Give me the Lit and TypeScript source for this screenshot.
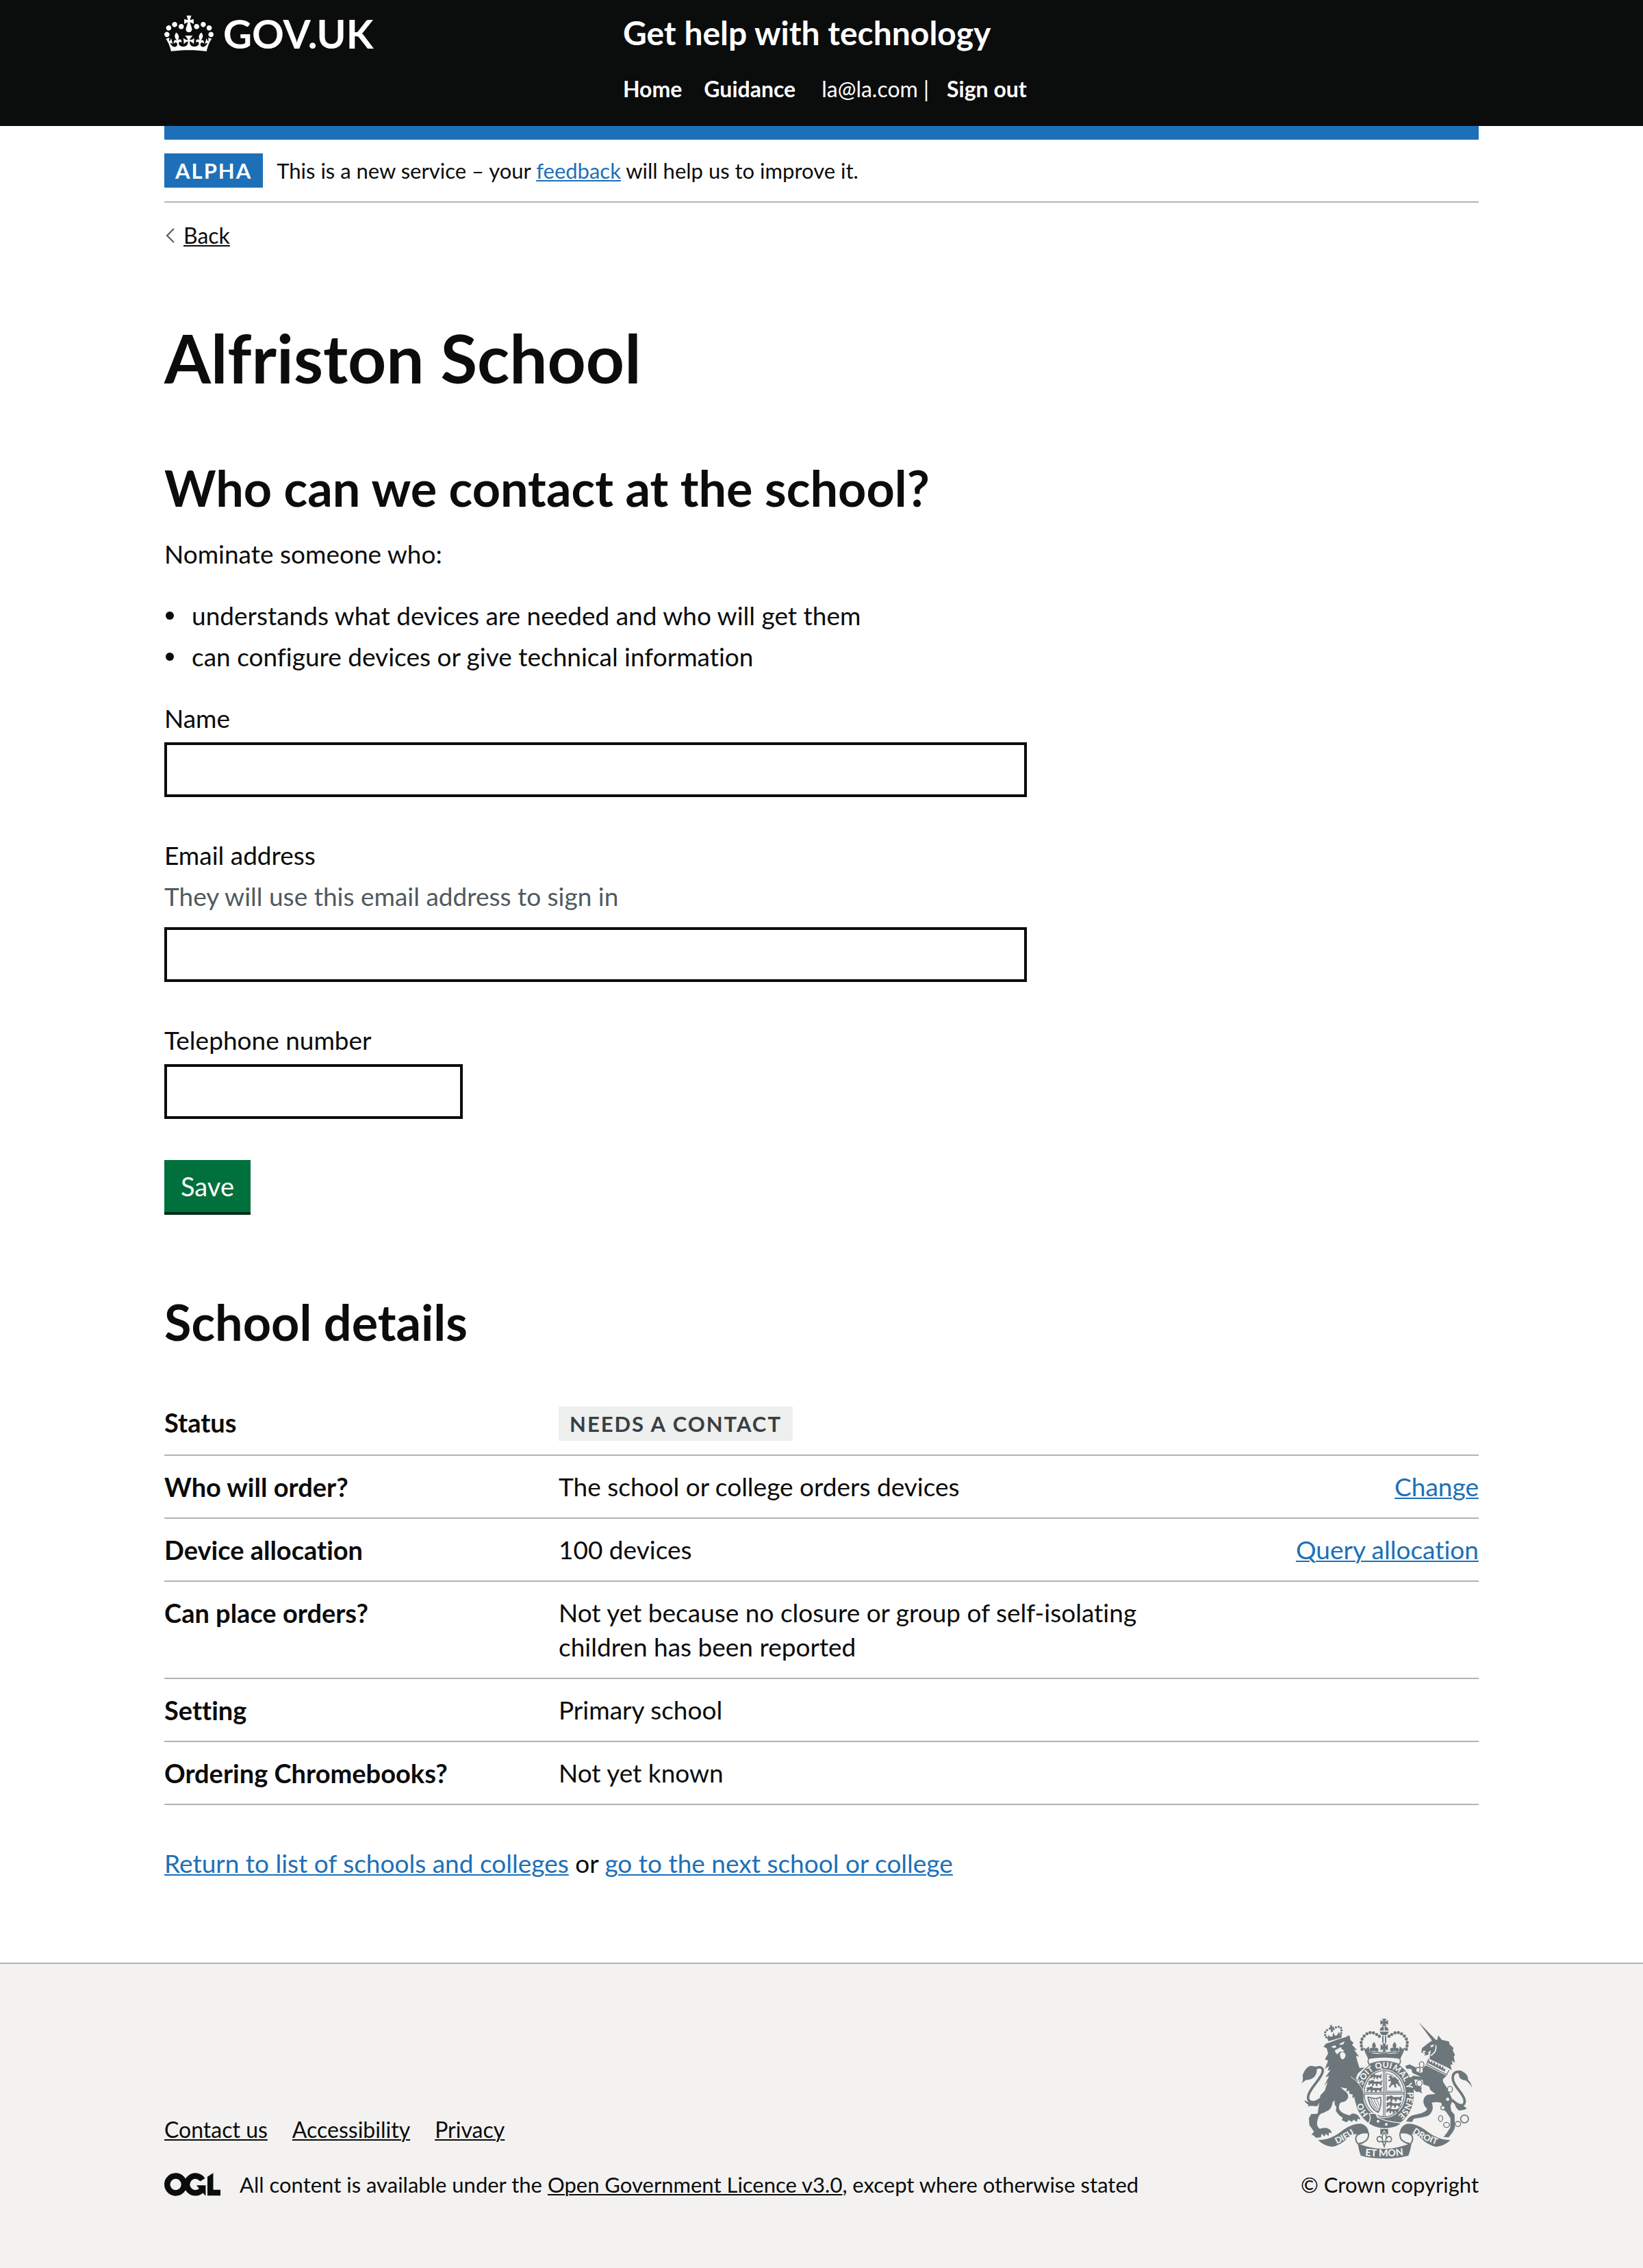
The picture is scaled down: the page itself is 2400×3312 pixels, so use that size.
import { LitElement, html, svg, css, nothing } from "lit";
import { customElement } from "lit/decorators.js";

const shared = css`
  :host {
    display: block;
    font-family: Lato, "Liberation Sans", Arial, sans-serif;
    font-variant-ligatures: none;
    color: #0b0c0c;
  }
  * {
    box-sizing: border-box;
  }
  .container {
    max-width: 1920px;
    margin: 0 auto;
  }
  a {
    text-decoration-thickness: 2px;
    text-underline-offset: 2px;
  }
  .link {
    color: #1d70b8;
  }
  .plain {
    color: #0b0c0c;
  }
`;

@customElement("site-header")
class SiteHeader extends LitElement {
  static styles = [
    shared,
    css`
      .bar {
        background: #0b0c0c;
        color: #fff;
      }
      .columns {
        display: grid;
        grid-template-columns: 33.33% 1fr;
        column-gap: 30px;
        padding: 20px 0 34px;
      }
      .logo {
        display: flex;
        align-items: flex-start;
        gap: 14px;
        justify-self: start;
        color: #fff;
        font-size: 58px;
        line-height: 58px;
        font-weight: 700;
        text-decoration: none;
      }
      .crown {
        display: block;
        width: 72px;
        height: 60px;
        fill: currentColor;
      }
      .service {
        display: block;
        width: fit-content;
        color: #fff;
        font-size: 48px;
        line-height: 56px;
        font-weight: 700;
        text-decoration: none;
      }
      .nav {
        display: flex;
        align-items: baseline;
        margin-top: 34px;
        font-size: 32px;
        line-height: 40px;
      }
      .nav a {
        color: #fff;
        font-weight: 700;
        text-decoration: none;
      }
      .home {
        margin-right: 32px;
      }
      .account {
        margin: 0 26px 0 38px;
      }
      .stripe {
        height: 20px;
        background: #1d70b8;
      }
    `,
  ];

  render() {
    return html`
      <header>
        <div class="bar">
          <div class="container columns">
            <a class="logo" href="#">
              <svg class="crown" viewBox="0 -5 132 110" aria-hidden="true">
                <path
                  fill-rule="evenodd"
                  d="M25 30.2c3.5 1.5 7.7-.2 9.1-3.7 1.5-3.6-.2-7.8-3.9-9.2-3.6-1.4-7.6.3-9.1 3.9-1.4 3.5.3 7.5 3.9 9zM9 39.5c3.6 1.5 7.8-.2 9.2-3.7 1.5-3.6-.2-7.8-3.9-9.1-3.6-1.5-7.6.2-9.1 3.8-1.4 3.5.3 7.5 3.8 9zM4.4 57.2c3.5 1.5 7.7-.2 9.1-3.8 1.5-3.6-.2-7.7-3.9-9.1-3.5-1.5-7.6.3-9.1 3.8-1.4 3.5.3 7.6 3.9 9.1zm38.3-21.4c3.5 1.5 7.7-.2 9.1-3.8 1.5-3.6-.2-7.7-3.9-9.1-3.6-1.5-7.6.3-9.1 3.8-1.3 3.6.4 7.7 3.9 9.1zm64.4-5.6c-3.6 1.5-7.8-.2-9.1-3.7-1.5-3.6.2-7.8 3.8-9.2 3.6-1.4 7.7.3 9.2 3.9 1.3 3.5-.4 7.5-3.9 9zm15.9 9.3c-3.6 1.5-7.7-.2-9.1-3.7-1.5-3.6.2-7.8 3.7-9.1 3.6-1.5 7.7.2 9.2 3.8 1.5 3.5-.3 7.5-3.8 9zm4.7 17.7c-3.6 1.5-7.8-.2-9.2-3.8-1.5-3.6.2-7.7 3.9-9.1 3.6-1.5 7.7.3 9.2 3.8 1.3 3.5-.4 7.6-3.9 9.1zM89.3 35.8c-3.6 1.5-7.8-.2-9.2-3.8-1.4-3.6.2-7.7 3.9-9.1 3.6-1.5 7.7.3 9.2 3.8 1.4 3.6-.3 7.7-3.9 9.1zM69.7 17.7l8.9 4.7V9.3l-8.9 2.8c-.2-.3-.5-.6-.9-.9L72.4 0H59.6l3.5 11.2c-.3.3-.6.5-.9.9l-8.8-2.8v13.1l8.8-4.7c.3.3.6.7.9.9l-5 15.4v.1c-.2.8-.4 1.6-.4 2.4 0 4.1 3.1 7.5 7 8.1h.2c.3 0 .7.1 1 .1.4 0 .7 0 1-.1h.2c4-.6 7.1-4.1 7.1-8.1 0-.8-.1-1.7-.4-2.4V34l-5.1-15.4c.4-.2.7-.6 1-.9zM66 92.8c16.9 0 32.8 1.1 47.1 3.2 4-16.9 8.9-26.7 14-33.5l-9.6-3.4c1 4.9 1.1 7.2 0 10.2-1.5-1.4-3-4.3-4.2-8.7L108.6 76c2.8-2 5-3.2 7.5-3.3-4.4 9.4-10 11.9-13.6 11.2-4.3-.8-6.3-4.6-5.6-7.9 1-4.7 5.7-5.9 8-.5 4.3-8.7-3-11.4-7.6-8.8 7.1-7.2 7.9-13.5 2.1-21.1-8 6.1-8.1 12.3-4.5 20.8-4.7-5.4-12.1-2.5-9.5 6.2 3.4-5.2 7.9-2 7.2 3.1-.6 4.3-6.4 7.8-13.5 7.2-10.3-.9-10.9-8-11.2-13.8 2.5-.5 7.1 1.8 11 7.3L80.2 60c-4.1 4.4-8 5.3-12.3 5.4 1.4-4.4 8-11.6 8-11.6H55.5s6.4 7.2 7.9 11.6c-4.2-.1-8-1-12.3-5.4l1.4 16.4c3.9-5.5 8.5-7.7 10.9-7.3-.3 5.8-.9 12.8-11.1 13.8-7.2.6-12.9-2.9-13.5-7.2-.7-5 3.8-8.3 7.1-3.1 2.7-8.7-4.6-11.6-9.4-6.2 3.7-8.5 3.6-14.7-4.6-20.8-5.8 7.6-5 13.9 2.2 21.1-4.7-2.6-11.9.1-7.7 8.8 2.3-5.5 7.1-4.2 8.1.5.7 3.3-1.3 7.1-5.7 7.9-3.5.7-9-1.8-13.5-11.2 2.5.1 4.7 1.3 7.5 3.3l-4.7-15.4c-1.2 4.4-2.7 7.2-4.3 8.7-1.1-3-.9-5.3 0-10.2l-9.5 3.4c5 6.9 9.9 16.7 14 33.5 14.8-2.1 30.8-3.2 47.7-3.2z"
                />
              </svg>
              <span>GOV.UK</span>
            </a>
            <div>
              <a class="service" href="#">Get help with technology</a>
              <nav class="nav">
                <a class="home" href="#">Home</a>
                <a href="#">Guidance</a>
                <span class="account">la@la.com |</span>
                <a href="#">Sign out</a>
              </nav>
            </div>
          </div>
        </div>
        <div class="container stripe"></div>
      </header>
    `;
  }
}

interface Field {
  id: string;
  label: string;
  type: string;
  hint?: string;
  short?: boolean;
}

const fields: Field[] = [
  { id: "name", label: "Name", type: "text" },
  { id: "email", label: "Email address", type: "email", hint: "They will use this email address to sign in" },
  { id: "telephone", label: "Telephone number", type: "tel", short: true },
];

@customElement("contact-form")
class ContactForm extends LitElement {
  static styles = [
    shared,
    css`
      .form {
        display: flex;
        flex-direction: column;
        align-items: flex-start;
        gap: 60px;
        font-size: 37px;
        line-height: 50px;
      }
      .group {
        width: 100%;
        max-width: 1260px;
      }
      .label {
        display: block;
        margin-bottom: 10px;
      }
      .hint {
        margin-bottom: 20px;
        color: #505a5f;
      }
      .input {
        display: block;
        width: 100%;
        height: 80px;
        padding: 10px;
        border: 4px solid #0b0c0c;
        border-radius: 0;
        background: #fff;
        color: inherit;
        font: inherit;
      }
      .short {
        max-width: 436px;
      }
      .button {
        padding: 13px 24px;
        border: 0;
        background: #00703c;
        box-shadow: 0 4px 0 #002d18;
        color: #fff;
        font: inherit;
        font-size: 38px;
        cursor: pointer;
      }
    `,
  ];

  render() {
    return html`
      <form class="form" @submit=${(e: Event) => e.preventDefault()}>
        ${fields.map(
          (f) => html`
            <div class="group">
              <label class="label" for=${f.id}>${f.label}</label>
              ${f.hint ? html`<div class="hint" id="${f.id}-hint">${f.hint}</div>` : nothing}
              <input
                class="input ${f.short ? "short" : ""}"
                id=${f.id}
                name=${f.id}
                type=${f.type}
                aria-describedby=${f.hint ? `${f.id}-hint` : nothing}
              />
            </div>
          `
        )}
        <button class="button" type="submit">Save</button>
      </form>
    `;
  }
}

interface Row {
  key: string;
  value: string;
  tag?: boolean;
  action?: string;
}

const rows: Row[] = [
  { key: "Status", value: "Needs a contact", tag: true },
  { key: "Who will order?", value: "The school or college orders devices", action: "Change" },
  { key: "Device allocation", value: "100 devices", action: "Query allocation" },
  { key: "Can place orders?", value: "Not yet because no closure or group of self-isolating children has been reported" },
  { key: "Setting", value: "Primary school" },
  { key: "Ordering Chromebooks?", value: "Not yet known" },
];

@customElement("school-details")
class SchoolDetails extends LitElement {
  static styles = [
    shared,
    css`
      .list {
        margin: 0;
        font-size: 37px;
        line-height: 50px;
      }
      .row {
        display: grid;
        grid-template-columns: 30% 50% 20%;
        align-items: start;
        padding: 20px 0;
        border-bottom: 2px solid #b1b4b6;
      }
      .key {
        font-size: 38px;
        font-weight: 700;
      }
      .value,
      .actions {
        margin: 0;
      }
      .value {
        padding-right: 40px;
      }
      .actions {
        text-align: right;
      }
      .tag {
        display: block;
        width: fit-content;
        margin-top: 2px;
        padding: 9px 16px;
        background: #eeefef;
        color: #383f43;
        font-size: 31px;
        line-height: 32px;
        font-weight: 700;
        letter-spacing: 2px;
        text-transform: uppercase;
      }
    `,
  ];

  render() {
    return html`
      <dl class="list">
        ${rows.map(
          (r) => html`
            <div class="row">
              <dt class="key">${r.key}</dt>
              <dd class="value">${r.tag ? html`<strong class="tag">${r.value}</strong>` : r.value}</dd>
              ${r.action ? html`<dd class="actions"><a class="link" href="#">${r.action}</a></dd>` : nothing}
            </div>
          `
        )}
      </dl>
    `;
  }
}

const crownPearls = [
  [341, 218], [338, 203], [337, 188], [341, 173], [350, 160], [362, 150], [376, 145], [391, 146], [405, 153], [417, 161],
];
const smallPearls = [
  [184, 165], [179, 155], [179, 143], [187, 134], [216, 130], [226, 122], [238, 119], [248, 124], [251, 135], [249, 147],
];
const ringWords: [string, string][] = [
  ["HO", "15.5%"], ["SOIT", "37%"], ["QUI", "49.5%"], ["MAL", "61%"], ["Y", "70%"], ["PENSE", "82%"],
];
const chainLinks = [
  [602, 285, 10, 13], [586, 308, 9, 11], [592, 367, 12, 14], [726, 393, 11, 13], [716, 437, 9, 9],
  [695, 474, 9, 9], [685, 521, 9, 13], [711, 549, 13, 11], [761, 545, 12, 11],
];
const passant =
  "M0 9 q4 -8 9 -4 l4 -4 7 2 1 5 q10 -2 18 0 q8 0 9 -7 q4 6 -1 11 l1 10 h-6 l-3 -6 -6 1 -1 8 h-6 l1 -7 -7 -2 -2 9 h-6 l2 -9 -5 -1 -5 7 -5 -2 3 -6z";

@customElement("royal-arms")
class RoyalArms extends LitElement {
  static styles = css`
    :host {
      display: block;
    }
    .art {
      display: block;
      width: 250px;
      height: 204px;
      font-family: Lato, "Liberation Sans", sans-serif;
      font-weight: 900;
    }
    .ink {
      fill: #6d777b;
    }
    .paper {
      fill: #f3f2f1;
    }
    .line {
      fill: none;
      stroke: #6d777b;
    }
    .gap {
      fill: none;
      stroke: #f3f2f1;
    }
  `;

  render() {
    const half = svg`
      ${crownPearls.map(([x, y]) => svg`<circle class="ink" cx=${x} cy=${y} r="7" />`)}
      <path class="ink" d="M393 185q14 16 4 28q10-5 15 3q3 8-5 12l-14-4l-14 4q-8-4-5-12q5-8 15-3q-10-12 4-28z" />
      <path class="ink" d="M346 209l12 8 12-12 4 24-18 6z" />
      <path class="line" stroke-width="5" d="M364 232Q400 226 438 236" />
    `;
    const ribbon = svg`
      <path class="ink" d="M148 616q36-2 58-12q24-10 54-34q40-28 76-26q30 8 34 39q-30 2-42 10q-28-12-52 16q-32 30-66 36q-34-2-62-29z" />
      <path class="line" stroke-width="6" d="M369 584q-44-6-54 16q-6 18 10 34M369 584q2 28-14 36q-12 10-28 11" />
    `;
    return html`
      <svg class="art" viewBox="72 84 750 612" aria-hidden="true">
        <defs>
          <path id="garter" d="M438 531A101 116 0 0 1 438 299A101 116 0 0 1 438 531" />
          <path id="dieu" d="M212 640Q266 620 324 576" />
          <path id="mon" d="M345 683Q438 694 532 680" />
          <path id="droit" d="M548 574Q604 618 682 640" />
        </defs>

        <path class="line" stroke-width="11" d="M182 404C165 440 125 464 106 440C92 405 160 352 168 318C172 298 158 292 138 300" />
        <path class="ink" d="M72 374q14-22 8-42q12-36 34-42q22 0 28 8q4 24-10 40q-12 12-34 14q-18 8-26 22z" />
        <path class="ink" d="M88 440q14 12 30 8q26-2 42-20q-4 26-18 40q-26-4-40 0q4-6 4-8q-14-6-18-20z" />

        <path class="line" stroke-width="11" d="M735 440C770 474 794 468 790 440C783 405 737 380 738 340C740 320 754 314 770 318" />
        <path class="ink" d="M822 386q-2-20-16-34q2-24-30-40q-16-4-24 4q16 6 14 22q8 14 28 16q20 12 28 32z" />
        <path class="ink" d="M742 440q8 16 26 18q16 2 32 20q-18 10-34 8q-16-8-24-46z" />

        <path
          class="ink"
          d="M172 206L184 192L203 186L240 172L286 157L290 178L304 190L297 198L319 222L306 220L327 250L314 247L322 275L330 300L352 297L322 325L314 345L330 378L347 402L350 432L340 444L330 430L322 442L308 438L312 424L298 432L300 416L284 412L286 400L270 402L276 390L244 384Q258 392 262 398Q282 410 280 428Q276 446 250 450Q238 456 240 478Q246 494 264 500L286 508Q296 496 308 500Q326 502 334 526L322 522L318 536L304 526L296 536L284 528L272 538L252 528L256 518L240 506L226 488L228 470Q216 460 222 440L212 450Q208 474 196 484Q176 496 160 500Q146 510 143 545Q146 560 156 566Q176 558 190 564Q206 570 208 586L196 582L194 598L182 588L176 600L164 588L160 604L138 605L130 596L120 592L130 578L110 550L108 520L118 502L146 500L152 460L158 420L178 398L190 360L175 378L196 335L180 340L203 308L190 312L196 292L178 304L192 268L178 262L192 236L186 214Z"
        />
        <path class="paper" d="M206 206l18-6 4 10-14 2zM240 195l24-12-4 12-14 4zM222 222q18-8 26-14l4 10 10 4-4 6-14 0-12 12-8-8zM244 240q4-12 14-10q12 4 10 18q-4 12-14 14q-8-2-10-22z" />
        <g class="ink">
          ${smallPearls.map(([x, y]) => svg`<circle cx=${x} cy=${y} r="5" />`)}
          <path d="M187 166l6 16 58-15 0-18-8 4-4-12-8 16-8 2-8-14-4 16-10 2-8-8-2 10zM200 112l10 0-2 8 8-2 2 10-8-1 4 14-9 2-2-13-7 3-2-9 8-2z" />
        </g>
        <path class="gap" stroke-width="3" d="M188 190q40-18 86-28" />

        <path class="ink" d="M588 98L664 176L650 183Z" />
        <path class="ink" d="M600 232L604 212L630 192L650 178L670 176L675 157L690 176L722 184L724 196L742 212L738 222L748 242L743 250L748 277L734 268L738 286L728 284L734 310L720 300L636 260L642 222L630 232L634 240L614 246L618 236Z" />
        <path class="paper" d="M640 202l16-6-4 10-8 4zM606 226l14-2-4 8-8 2z" />
        <path class="gap" stroke-width="5" d="M664 200q6 28-22 46" />
        <path class="paper" d="M630 258L722 310L712 332L622 284Z" />
        <path class="line" stroke-width="4" d="M632 260L624 284L712 329L722 308" />
        <path class="ink" d="M630 278l4-16 6 14 8-8 2 14 8-10 6 16 8-10 4 16 8-10 4 16 8-10 2 16 8-6-2 16z" />
        <path
          class="ink"
          d="M620 288L712 334L698 346Q692 354 698 364L716 392L738 440L728 466L732 488L746 504L748 562L736 584L720 604L698 602L712 584L728 560L728 520L712 496L694 476L688 452Q666 446 646 452Q652 464 650 480Q646 500 628 510L606 516L568 522L560 536L534 534Q542 516 560 508L600 498Q624 490 626 478Q608 464 610 440Q614 420 632 416L662 414L640 396L634 380L610 372L606 352L570 350L576 376L602 384L600 398L604 412L592 404L578 404L558 384L548 344L566 334L598 338L562 322L556 304L536 304L530 290L550 284L574 296L592 322L606 318L606 302Z"
        />

        <ellipse class="ink" cx="438" cy="415" rx="130" ry="148" />
        <ellipse class="paper" cx="438" cy="412" rx="94" ry="107" />
        <ellipse class="line" cx="438" cy="412" rx="88" ry="101" stroke-width="4" />
        <path class="line" stroke-width="4" d="M350 408H526M350 414H526M435 312V512M441 312V512" />
        <path class="gap" stroke-width="2" d="M350 411H526M438 312V512" />
        <g class="ink">
          <path d=${passant} transform="translate(378 324)" />
          <path d=${passant} transform="translate(368 351) scale(1.25 1.1)" />
          <path d=${passant} transform="translate(360 379) scale(1.4 1.1)" />
          <path d=${passant} transform="translate(447 419) scale(1.4 1.1)" />
          <path d=${passant} transform="translate(447 446) scale(1.3 1.1)" />
          <path d=${passant} transform="translate(447 473) scale(1.1 1)" />
          <path d="M456 338l12-6 8 10 12-2 4 8 10 4-2 12 8 14-6 2-6-10-8 0 4 14-8 2-4-14-10 4-6 10-6-4 8-14 2-12-12 2 0-6 10-4z" />
        </g>
        <path class="line" stroke-width="3" d="M448 402V324Q500 330 516 402Z" />
        <path class="line" stroke-width="5" d="M366 426Q396 440 422 428Q428 462 412 494Q376 480 366 426" />
        <path class="line" stroke-width="3" d="M380 434L410 490M392 436L413 480M404 435L417 466M372 436L398 480" />
        <path class="ink" d="M368 504q28-14 36 8q50 28 106 30q-24 22-72 20q-40-2-70-22z" />
        <path class="gap" stroke-width="4" d="M372 500Q410 492 408 516Q456 538 512 540M372 500Q384 522 366 546" />
        <circle class="paper" cx="411" cy="533" r="6" />
        <circle class="paper" cx="447" cy="547" r="6" />
        ${ringWords.map(
          ([word, at]) => svg`<text class="paper" font-size="37" text-anchor="middle"><textPath href="#garter" startOffset=${at}>${word}</textPath></text>`
        )}
        <path class="ink" d="M300 345L330 376L346 402L348 432L338 444L330 430L320 442L308 436Z" />
        <path class="gap" stroke-width="3" d="M292 338Q334 366 352 412" />

        <path class="paper" d="M366 256H510L506 286Q438 262 370 286Z" />
        <path class="line" stroke-width="5" d="M372 256Q362 270 372 284Q438 258 504 284Q514 270 504 256" />
        <path class="ink" d="M354 230Q438 246 522 230L508 260Q438 248 368 260Z" />
        ${half}
        <g transform="matrix(-1 0 0 1 876 0)">${half}</g>
        <path class="ink" d="M422 196l12 8-4-12h16l-4 12 12-8v28l-12-8 4 14h-16l4-14-12 8z" />
        <path class="line" stroke-width="6" d="M432 160V190M444 160V190" />
        <circle class="ink" cx="438" cy="137" r="20" />
        <path class="gap" stroke-width="4" d="M416 138H460M438 116V138" />
        <path class="ink" d="M428 84h20l-6 12 13-6v20l-13-6 6 12h-20l6-12-13 6V90l13 6z" />

        ${chainLinks.map(
          ([cx, cy, rx, ry]) => svg`
            <ellipse class="paper" cx=${cx} cy=${cy} rx=${rx} ry=${ry} />
            <ellipse class="line" cx=${cx} cy=${cy} rx=${rx} ry=${ry} stroke-width="4" />`
        )}
        <circle class="line" cx="790" cy="523" r="17" stroke-width="5" />

        ${ribbon}
        <g transform="matrix(-1 0 0 1 876 0)">${ribbon}</g>
        <path class="ink" d="M322 630Q380 654 438 654Q496 654 558 628Q554 660 544 684Q500 696 438 696Q375 696 335 683Q326 660 322 630Z" />
        <path class="ink" d="M421 567h34v24h-34z" />
        <path class="paper" d="M438 572l14 24h-28z" />
        <path
          class="line"
          stroke-width="5"
          d="M438 582Q424 598 432 616Q424 594 410 602Q402 612 412 622Q422 624 430 620L438 644L446 620Q456 624 466 622Q474 612 466 602Q452 594 444 616Q452 598 438 582ZM422 622H454"
        />
        <text class="paper" font-size="38" text-anchor="middle"><textPath href="#dieu" startOffset="50%">DIEU</textPath></text>
        <text class="paper" font-size="43" text-anchor="middle"><textPath href="#mon" startOffset="50%">ET MON</textPath></text>
        <text class="paper" font-size="38" text-anchor="middle"><textPath href="#droit" startOffset="50%">DROIT</textPath></text>
      </svg>
    `;
  }
}

@customElement("site-footer")
class SiteFooter extends LitElement {
  static styles = [
    shared,
    css`
      .footer {
        padding: 80px 0 102px;
        border-top: 2px solid #b1b4b6;
        background: #f3f2f1;
        font-size: 31px;
        line-height: 40px;
      }
      .meta {
        display: flex;
        justify-content: space-between;
        align-items: flex-end;
      }
      .links {
        display: flex;
        gap: 36px;
        margin: 0 0 40px;
        padding: 0;
        list-style: none;
        font-size: 32px;
      }
      .licence {
        display: flex;
        align-items: center;
        gap: 28px;
      }
      .ogl {
        display: block;
        width: 82px;
        height: 34px;
      }
      .mark {
        fill: none;
        stroke: #0b0c0c;
        stroke-width: 50;
      }
      .solid {
        fill: #0b0c0c;
      }
      .crown {
        display: flex;
        flex-direction: column;
        align-items: flex-start;
        gap: 18px;
      }
    `,
  ];

  render() {
    return html`
      <footer class="footer">
        <div class="container meta">
          <div>
            <ul class="links">
              ${["Contact us", "Accessibility", "Privacy"].map((t) => html`<li><a class="plain" href="#">${t}</a></li>`)}
            </ul>
            <div class="licence">
              <svg class="ogl" viewBox="0 0 483 196" aria-hidden="true">
                <circle class="mark" cx="98" cy="98" r="73" />
                <path class="mark" d="M329 58A73 73 0 1 0 326 142" />
                <path class="solid" d="M276 105H356V193H353L300 133Z" />
                <path class="solid" d="M371 32L421 0V143H483V194H371Z" />
              </svg>
              <span
                >All content is available under the <a class="plain" href="#">Open Government Licence v3.0</a>, except
                where otherwise stated</span
              >
            </div>
          </div>
          <div class="crown">
            <royal-arms></royal-arms>
            <span>© Crown copyright</span>
          </div>
        </div>
      </footer>
    `;
  }
}

@customElement("app-root")
class AppRoot extends LitElement {
  static styles = [
    shared,
    css`
      .page {
        background: #fff;
      }
      .phase {
        display: flex;
        align-items: center;
        gap: 20px;
        padding: 20px 0;
        border-bottom: 2px solid #b1b4b6;
        font-size: 31px;
        line-height: 50px;
      }
      .tag {
        padding: 9px 16px;
        background: #1d70b8;
        color: #fff;
        font-size: 31px;
        line-height: 32px;
        letter-spacing: 2px;
      }
      .back {
        display: flex;
        align-items: center;
        width: fit-content;
        gap: 13px;
        margin: 28px 0 108px 3px;
        font-size: 32px;
        line-height: 40px;
      }
      .chevron {
        width: 12px;
        height: 22px;
        fill: none;
        stroke: #505a5f;
        stroke-width: 2;
      }
      .title {
        margin: 0 0 100px;
        font-size: 98px;
        line-height: 100px;
      }
      .heading {
        margin: 0 0 32px;
        font-size: 72px;
        line-height: 80px;
      }
      .details {
        margin: 120px 0 62px;
      }
      .text {
        margin: 0;
        font-size: 37px;
        line-height: 50px;
      }
      .bullets {
        display: grid;
        gap: 10px;
        margin: 40px 0;
        padding: 0;
        list-style: none;
        font-size: 37px;
        line-height: 50px;
      }
      .bullet {
        display: flex;
        align-items: center;
        gap: 26px;
      }
      .bullet::before {
        content: "";
        width: 12px;
        height: 12px;
        margin-left: 2px;
        border-radius: 50%;
        background: #0b0c0c;
      }
      .onward {
        margin: 60px 0 120px;
      }
    `,
  ];

  render() {
    return html`
      <div class="page">
        <site-header></site-header>
        <div class="container">
          <div class="phase">
            <strong class="tag">ALPHA</strong>
            <span>This is a new service – your <a class="link" href="#">feedback</a> will help us to improve it.</span>
          </div>
          <a class="back plain" href="#">
            <svg class="chevron" viewBox="0 0 12 22" aria-hidden="true"><path d="M11 1L1 11L11 21" /></svg>
            <span>Back</span>
          </a>
          <main>
            <h1 class="title">Alfriston School</h1>
            <h2 class="heading">Who can we contact at the school?</h2>
            <p class="text">Nominate someone who:</p>
            <ul class="bullets">
              <li class="bullet">understands what devices are needed and who will get them</li>
              <li class="bullet">can configure devices or give technical information</li>
            </ul>
            <contact-form></contact-form>
            <h2 class="heading details">School details</h2>
            <school-details></school-details>
            <p class="text onward">
              <a class="link" href="#">Return to list of schools and colleges</a> or
              <a class="link" href="#">go to the next school or college</a>
            </p>
          </main>
        </div>
        <site-footer></site-footer>
      </div>
    `;
  }
}
